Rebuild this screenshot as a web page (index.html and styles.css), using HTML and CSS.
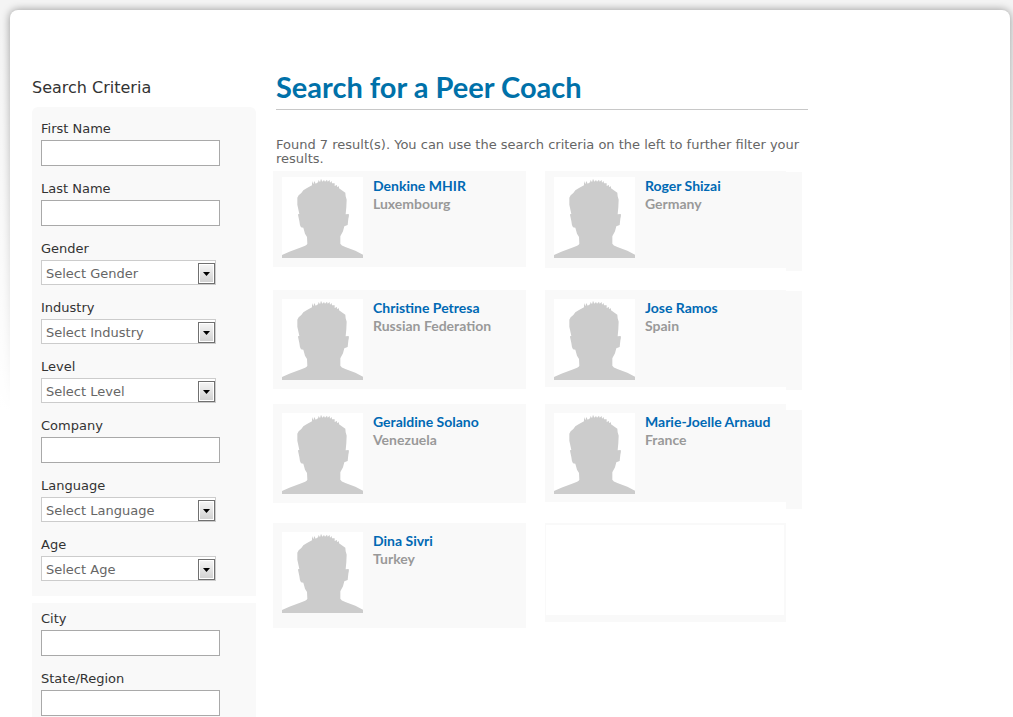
FILE: index.html
```html
<!DOCTYPE html>
<html lang="en">

<head>
  <meta charset="utf-8">
  <title>Search for a Peer Coach</title>
  <link rel="stylesheet" href="styles.css">
</head>

<body>
  <svg class="symbols" aria-hidden="true">
    <symbol id="person" viewBox="0 0 243 243">
      <path d="M0 243V234L22 224L62 209Q75 204 76 200L75 180L69 170L64 152L57 151Q53 145 52 132L48 113Q48 110 52 111L46 83V62L50 55L58 48L64 40L75 33L90 25V12L94 22L97 12L101 20L108 16L110 9L114 16L117 5L121 14L126 9L129 14L135 8L137 14L143 9L144 17L149 12L150 19L158 19V27L165 24V30L171 28V34L190 47L191 58L194 68L193 90L191 112L200 111Q202 114 199 125L197 144L187 148L183 163L175 178V200Q177 205 190 210L220 221L243 233V243Z" />
    </symbol>
  </svg>

  <div class="page">
    <aside class="sidebar">
      <h2>Search Criteria</h2>
      <form>
        <div class="group">
          <label for="firstName">First Name</label>
          <input type="text" id="firstName">
          <label for="lastName">Last Name</label>
          <input type="text" id="lastName">
          <label for="gender">Gender</label>
          <select id="gender">
            <option>Select Gender</option>
          </select>
          <label for="industry">Industry</label>
          <select id="industry">
            <option>Select Industry</option>
          </select>
          <label for="level">Level</label>
          <select id="level">
            <option>Select Level</option>
          </select>
          <label for="company">Company</label>
          <input type="text" id="company">
          <label for="language">Language</label>
          <select id="language">
            <option>Select Language</option>
          </select>
          <label for="age">Age</label>
          <select id="age">
            <option>Select Age</option>
          </select>
        </div>
        <div class="group location">
          <label for="city">City</label>
          <input type="text" id="city">
          <label for="state">State/Region</label>
          <input type="text" id="state">
        </div>
      </form>
    </aside>

    <main>
      <h1>Search for a Peer Coach</h1>
      <p class="summary">Found 7 result(s). You can use the search criteria on the left to further filter your results.</p>

      <div class="results">
        <div class="card first">
          <svg class="avatar"><use href="#person" /></svg>
          <div class="info">
            <a href="#">Denkine MHIR</a>
            <span>Luxembourg</span>
          </div>
        </div>
        <div class="card first wide">
          <svg class="avatar"><use href="#person" /></svg>
          <div class="info">
            <a href="#">Roger Shizai</a>
            <span>Germany</span>
          </div>
        </div>
        <div class="card">
          <svg class="avatar"><use href="#person" /></svg>
          <div class="info">
            <a href="#">Christine Petresa</a>
            <span>Russian Federation</span>
          </div>
        </div>
        <div class="card wide">
          <svg class="avatar"><use href="#person" /></svg>
          <div class="info">
            <a href="#">Jose Ramos</a>
            <span>Spain</span>
          </div>
        </div>
        <div class="card">
          <svg class="avatar"><use href="#person" /></svg>
          <div class="info">
            <a href="#">Geraldine Solano</a>
            <span>Venezuela</span>
          </div>
        </div>
        <div class="card wide low">
          <svg class="avatar"><use href="#person" /></svg>
          <div class="info">
            <a href="#">Marie-Joelle Arnaud</a>
            <span>France</span>
          </div>
        </div>
        <div class="card last">
          <svg class="avatar"><use href="#person" /></svg>
          <div class="info">
            <a href="#">Dina Sivri</a>
            <span>Turkey</span>
          </div>
        </div>
        <div class="empty"></div>
      </div>
    </main>
  </div>
</body>

</html>
```
FILE: styles.css
```css
* {
  box-sizing: border-box;
}

body {
  margin: 0;
  padding: 10px 3px 0 10px;
  background: #f4f4f4;
  font-family: Verdana, "DejaVu Sans", sans-serif;
  font-size: 13px;
  color: #333333;
}

/* fades the backdrop and the page shadow out to white */
body::before {
  content: "";
  position: absolute;
  top: 0;
  left: 0;
  right: 0;
  height: 100%;
  background: linear-gradient(rgba(255, 255, 255, 0) 20px, #ffffff 410px);
}

.symbols {
  display: none;
}

.page {
  display: flex;
  gap: 20px;
  min-height: calc(100vh - 10px);
  padding: 60px 22px 0;
  background: #ffffff;
  border-radius: 8px 8px 0 0;
  box-shadow: 0 0 9px rgba(0, 0, 0, 0.4);
}

.sidebar,
main {
  position: relative;
}

.sidebar {
  flex: 0 0 224px;
  padding-top: 6px;
}

h2 {
  margin: 0 0 7px;
  font-size: 16px;
  font-weight: normal;
  line-height: 24px;
}

.group {
  padding: 11px 9px 3px;
  background: #f9f9f9;
  border-radius: 6px 6px 0 0;
}

.location {
  margin-top: 7px;
  padding: 5px 9px 1px;
  border-radius: 0;
}

label {
  display: block;
  line-height: 22px;
}

input,
select {
  display: block;
  margin: 0 0 12px;
  background-color: #ffffff;
  border-radius: 0;
  font-family: inherit;
  font-size: 13px;
  color: #666666;
}

input {
  width: 179px;
  height: 26px;
  padding: 0 4px;
  border: 1px solid #a9a9a9;
}

.location input:last-child {
  margin-bottom: 0;
}

select {
  width: 175px;
  height: 25px;
  padding: 2px 20px 0 4px;
  border: 1px solid #cccccc;
  appearance: none;
  background-image: url("data:image/svg+xml,%3Csvg xmlns='http://www.w3.org/2000/svg' width='17' height='21'%3E%3ClinearGradient id='g' x2='0' y2='1'%3E%3Cstop stop-color='%23f4f4f4'/%3E%3Cstop offset='1' stop-color='%23d2d2d2'/%3E%3C/linearGradient%3E%3Crect x='.5' y='.5' width='16' height='20' fill='%23fff' stroke='%23707070'/%3E%3Crect x='2' y='2' width='13' height='17' fill='url(%23g)'/%3E%3Cpath d='M5 9h7L8.500 13z'/%3E%3C/svg%3E");
  background-repeat: no-repeat;
  background-position: right 0 top 2px;
}

main {
  flex: 0 1 532px;
}

h1 {
  margin: 0;
  padding-bottom: 5px;
  border-bottom: 1px solid #c8c8c8;
  font-family: Lato, sans-serif;
  font-size: 29px;
  line-height: 34px;
  color: #0071a9;
}

.summary {
  margin: 28px 0 5px;
  line-height: 14px;
  color: #666666;
}

.results {
  display: grid;
  grid-template-columns: 253fr 257fr;
  grid-template-rows: 119px 114px 119px auto;
  column-gap: 19px;
  align-items: start;
  margin: 0 6px 0 -3px;
}

.card {
  display: flex;
  gap: 10px;
  min-height: 99px;
  padding: 9px 9px 0;
  background: #f9f9f9;
}

.first {
  min-height: 96px;
  padding-top: 6px;
}

.wide {
  min-height: 100px;
  background: linear-gradient(#f9f9f9, #f9f9f9) 0 0 / calc(100% - 16px) calc(100% - 3px) no-repeat,
    linear-gradient(#f9f9f9, #f9f9f9) 100% 100% / 16px calc(100% - 1px) no-repeat;
}

.low {
  min-height: 105px;
  background-size: calc(100% - 16px) calc(100% - 7px), 16px calc(100% - 6px);
}

.last {
  min-height: 105px;
}

.empty {
  width: calc(100% - 16px);
  min-height: 99px;
  border: 1px solid #f9f9f9;
  border-width: 2px 2px 7px 1px;
}

.avatar {
  flex: none;
  width: 81px;
  height: 81px;
  background: #ffffff;
  fill: #cccccc;
}

.info {
  font-family: Lato, sans-serif;
  font-size: 14px;
  font-weight: bold;
  line-height: 18px;
}

.info a {
  display: block;
  color: #0069b4;
  text-decoration: none;
}

.info span {
  color: #999999;
}
```
